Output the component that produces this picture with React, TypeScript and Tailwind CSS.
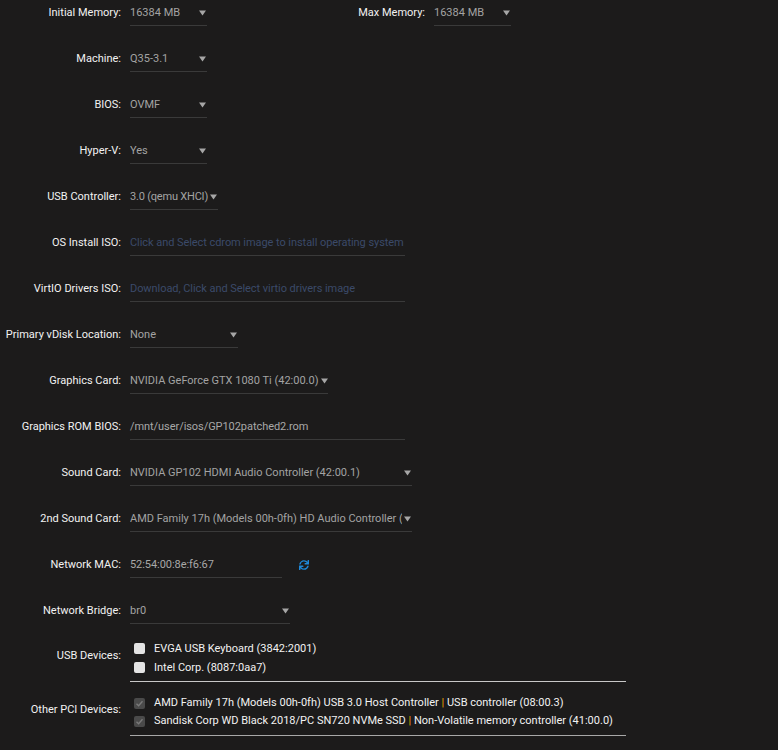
import React from "react";
import { FaSync } from "react-icons/fa";

const FONT = { fontFamily: "Roboto, 'Liberation Sans', sans-serif" };

function Caret() {
  return (
    <svg width="7" height="6" viewBox="0 0 7 6" className="shrink-0">
      <path d="M0 0.5 H7 L3.5 5.5 Z" fill="#a6a6a6" />
    </svg>
  );
}

function Label({ children }: { children: React.ReactNode }) {
  return (
    <div className="w-[121px] shrink-0 text-right pt-[4px] leading-[18px] text-[#f2f2f2]">
      {children}
    </div>
  );
}

function Select({
  value,
  width,
  tight,
  condensed,
}: {
  value: string;
  width: string;
  tight?: boolean;
  condensed?: boolean;
}) {
  return (
    <div
      className={`relative ml-[9px] pt-[4px] pb-[3px] leading-[18px] border-b border-[#3a3a3a] text-[#a3a3a3] ${width}`}
    >
      {tight ? (
        <div
          className={`flex items-center gap-[2px] whitespace-nowrap ${
            condensed ? "tracking-[-0.2px]" : ""
          }`}
        >
          <span>{value}</span>
          <Caret />
        </div>
      ) : (
        <>
          <div className="whitespace-nowrap overflow-hidden pr-[3px]">{value}</div>
          <span className="absolute right-0 top-[4px] h-[18px] bg-[#1c1b1b] pl-[2px] pr-[1px] flex items-center">
            <Caret />
          </span>
        </>
      )}
    </div>
  );
}

function Field({
  value,
  width,
  placeholder,
}: {
  value: string;
  width: string;
  placeholder?: boolean;
}) {
  return (
    <div
      className={`ml-[9px] pt-[4px] pb-[3px] leading-[18px] border-b border-[#3a3a3a] whitespace-nowrap tracking-[-0.06px] ${width} ${
        placeholder ? "text-[#3b4a69]" : "text-[#a8a8a8]"
      }`}
    >
      {value}
    </div>
  );
}

function Row({ children, h = "h-[46px]" }: { children: React.ReactNode; h?: string }) {
  return <div className={`flex items-start ${h}`}>{children}</div>;
}

function Check({ disabled }: { disabled?: boolean }) {
  if (disabled) {
    return (
      <span className="w-[11px] h-[11px] rounded-[2px] bg-[#4a4a4a] flex items-center justify-center shrink-0">
        <svg width="9" height="9" viewBox="0 0 9 9">
          <path d="M1.5 4.8 L3.6 6.8 L7.5 2.2" stroke="#7a7a7a" strokeWidth="1.4" fill="none" />
        </svg>
      </span>
    );
  }
  return <span className="w-[11px] h-[11px] rounded-[2px] bg-[#e4e4e4] shrink-0" />;
}

export default function App() {
  return (
    <div
      className="w-[778px] h-[750px] bg-[#1c1b1b] text-[11px] overflow-hidden"
      style={FONT}
    >
      <Row>
        <div className="flex w-[304px] shrink-0">
          <Label>Initial Memory:</Label>
          <Select value="16384 MB" width="w-[77px]" />
        </div>
        <Label>Max Memory:</Label>
        <Select value="16384 MB" width="w-[77px]" />
      </Row>
      <Row>
        <Label>Machine:</Label>
        <Select value="Q35-3.1" width="w-[77px]" />
      </Row>
      <Row>
        <Label>BIOS:</Label>
        <Select value="OVMF" width="w-[77px]" />
      </Row>
      <Row>
        <Label>Hyper-V:</Label>
        <Select value="Yes" width="w-[77px]" />
      </Row>
      <Row>
        <Label>USB Controller:</Label>
        <Select value="3.0 (qemu XHCI)" width="w-[88px]" tight condensed />
      </Row>
      <Row>
        <Label>OS Install ISO:</Label>
        <Field value="Click and Select cdrom image to install operating system" width="w-[275px]" placeholder />
      </Row>
      <Row>
        <Label>VirtIO Drivers ISO:</Label>
        <Field value="Download, Click and Select virtio drivers image" width="w-[275px]" placeholder />
      </Row>
      <Row>
        <Label>Primary vDisk Location:</Label>
        <Select value="None" width="w-[108px]" />
      </Row>
      <Row>
        <Label>Graphics Card:</Label>
        <Select value="NVIDIA GeForce GTX 1080 Ti (42:00.0)" width="w-[198px]" tight />
      </Row>
      <Row>
        <Label>Graphics ROM BIOS:</Label>
        <Field value="/mnt/user/isos/GP102patched2.rom" width="w-[275px]" />
      </Row>
      <Row>
        <Label>Sound Card:</Label>
        <Select value="NVIDIA GP102 HDMI Audio Controller (42:00.1)" width="w-[282px]" />
      </Row>
      <Row>
        <Label>2nd Sound Card:</Label>
        <Select value="AMD Family 17h (Models 00h-0fh) HD Audio Controller (08:00.3)" width="w-[282px]" />
      </Row>
      <Row>
        <Label>Network MAC:</Label>
        <Field value="52:54:00:8e:f6:67" width="w-[152px]" />
        <span className="ml-[17px] mt-[8px] text-[#1e88d8]">
          <FaSync size={10} />
        </span>
      </Row>
      <Row h="h-[41px]">
        <Label>Network Bridge:</Label>
        <Select value="br0" width="w-[160px]" />
      </Row>

      {/* USB devices */}
      <div className="flex items-start">
        <div className="w-[121px] shrink-0 text-right pt-[8px] leading-[18px] text-[#f2f2f2]">
          USB Devices:
        </div>
        <div className="ml-[9px] w-[496px] pb-[4px] border-b border-[#c8c8c8] leading-[19px] text-[#f2f2f2]">
          <div className="flex items-center gap-[9px] pl-[4px]">
            <Check />
            <span>EVGA USB Keyboard (3842:2001)</span>
          </div>
          <div className="flex items-center gap-[9px] pl-[4px]">
            <Check />
            <span>Intel Corp. (8087:0aa7)</span>
          </div>
        </div>
      </div>

      {/* PCI devices */}
      <div className="flex items-start mt-[12px]">
        <div className="w-[121px] shrink-0 text-right pt-[7px] leading-[18px] text-[#f2f2f2]">
          Other PCI Devices:
        </div>
        <div className="ml-[9px] w-[496px] pb-[5px] border-b border-[#a8a8a8] leading-[18px] text-[#f2f2f2]">
          <div className="flex items-center gap-[9px] pl-[4px]">
            <Check disabled />
            <span>
              AMD Family 17h (Models 00h-0fh) USB 3.0 Host Controller{" "}
              <span className="text-[#f0a000]">|</span> USB controller (08:00.3)
            </span>
          </div>
          <div className="flex items-center gap-[9px] pl-[4px]">
            <Check disabled />
            <span>
              Sandisk Corp WD Black 2018/PC SN720 NVMe SSD{" "}
              <span className="text-[#f0a000]">|</span> Non-Volatile memory controller (41:00.0)
            </span>
          </div>
        </div>
      </div>
    </div>
  );
}
